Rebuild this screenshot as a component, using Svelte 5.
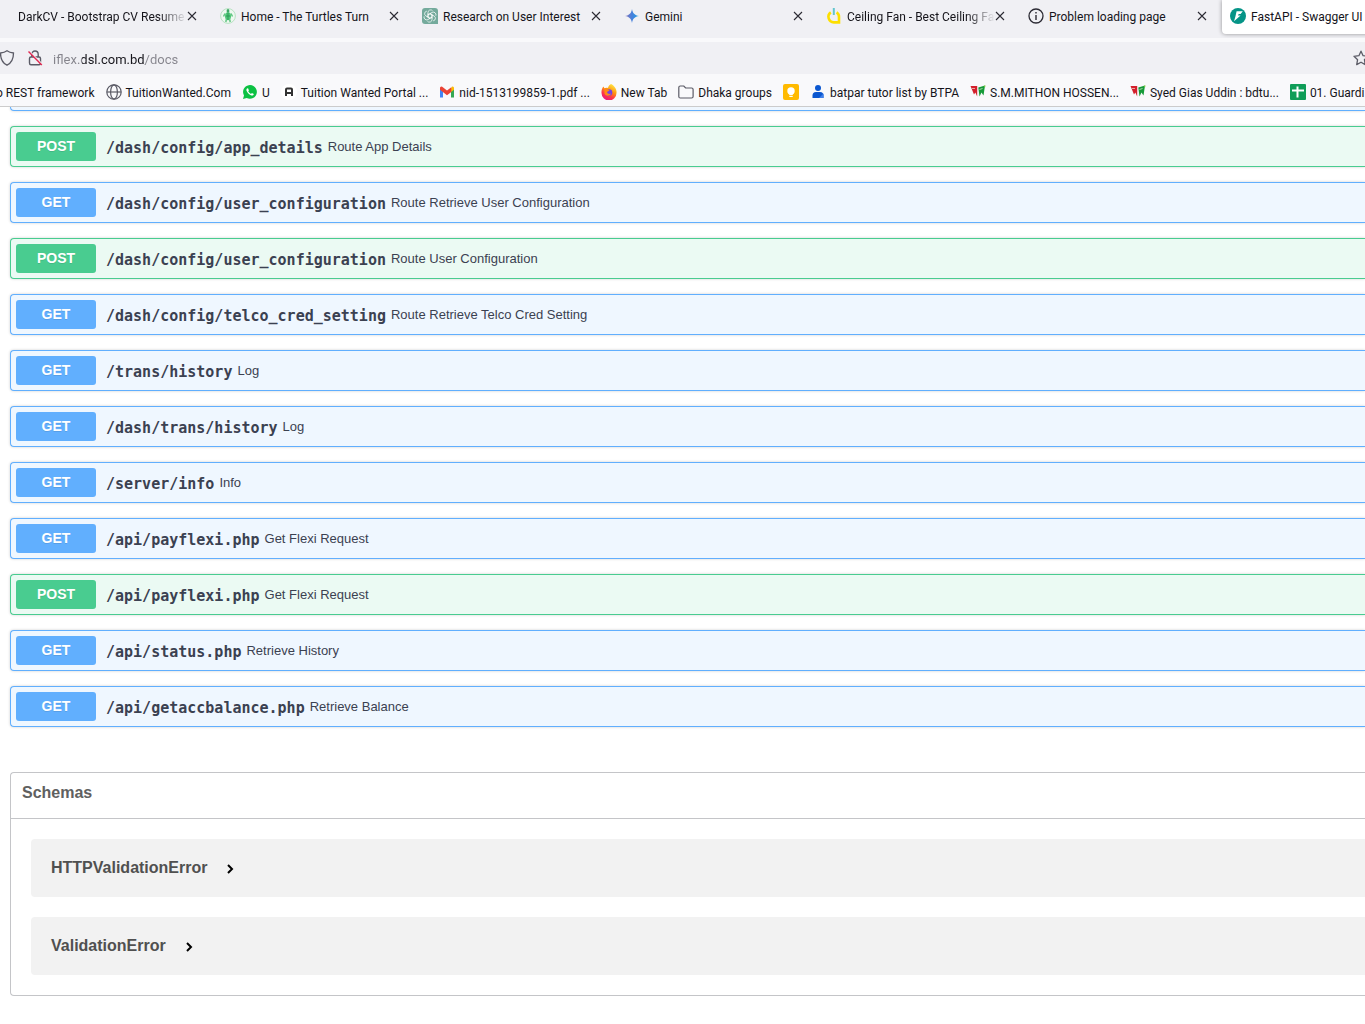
<script lang="ts">
  const tabs = [
    { icon: '', title: 'DarkCV - Bootstrap CV Resume', fade: true },
    { icon: 'turtle', title: 'Home - The Turtles Turn' },
    { icon: 'gpt', title: 'Research on User Interest' },
    { icon: 'gemini', title: 'Gemini' },
    { icon: 'power', title: 'Ceiling Fan - Best Ceiling Fa', fade: true },
    { icon: 'info', title: 'Problem loading page' },
    { icon: 'fastapi', title: 'FastAPI - Swagger UI', active: true }
  ];

  const bookmarks = [
    { icon: '', title: 'o REST framework' },
    { icon: 'globe', title: 'TuitionWanted.Com' },
    { icon: 'whatsapp', title: 'U' },
    { icon: 'portal', title: 'Tuition Wanted Portal ...' },
    { icon: 'gmail', title: 'nid-1513199859-1.pdf ...' },
    { icon: 'firefox', title: 'New Tab' },
    { icon: 'folder', title: 'Dhaka groups' },
    { icon: 'keep', title: '' },
    { icon: 'person', title: 'batpar tutor list by BTPA' },
    { icon: 'flags', title: 'S.M.MITHON HOSSEN...' },
    { icon: 'flags', title: 'Syed Gias Uddin : bdtu...' },
    { icon: 'sheet', title: '01. Guardi' }
  ];

  const operations = [
    { method: 'POST', path: '/dash/config/app_details', summary: 'Route App Details' },
    { method: 'GET', path: '/dash/config/user_configuration', summary: 'Route Retrieve User Configuration' },
    { method: 'POST', path: '/dash/config/user_configuration', summary: 'Route User Configuration' },
    { method: 'GET', path: '/dash/config/telco_cred_setting', summary: 'Route Retrieve Telco Cred Setting' },
    { method: 'GET', path: '/trans/history', summary: 'Log' },
    { method: 'GET', path: '/dash/trans/history', summary: 'Log' },
    { method: 'GET', path: '/server/info', summary: 'Info' },
    { method: 'GET', path: '/api/payflexi.php', summary: 'Get Flexi Request' },
    { method: 'POST', path: '/api/payflexi.php', summary: 'Get Flexi Request' },
    { method: 'GET', path: '/api/status.php', summary: 'Retrieve History' },
    { method: 'GET', path: '/api/getaccbalance.php', summary: 'Retrieve Balance' }
  ];

  const schemas = ['HTTPValidationError', 'ValidationError'];
</script>

{#snippet glyph(name: string)}
  <svg class="icon" viewBox="0 0 16 16" aria-hidden="true">
    {#if name === 'turtle'}
      <circle cx="8" cy="8" r="7.4" fill="#eef8f0" stroke="#a9dcb6" stroke-width=".8" />
      <ellipse cx="8" cy="3" rx="1.4" ry="1.9" fill="#3da765" />
      <path d="M5 5.5 3.5 8.5M11 5.5l1.5 3M6.3 11.5 5.8 14M9.7 11.5l.5 2.5" stroke="#62c583" stroke-width="1.5" />
      <ellipse cx="8" cy="8.3" rx="3" ry="4" fill="#4fc878" />
      <path d="M8 5v7M6 8h4" stroke="#2c9455" stroke-width=".9" />
    {:else if name === 'gpt'}
      <path d="M3 0h10a3 3 0 0 1 3 3v13H3a3 3 0 0 1-3-3V3a3 3 0 0 1 3-3z" fill="#74aa9c" />
      <g fill="none" stroke="#fff" stroke-width=".7">
        {#each [0, 60, 120, 180, 240, 300] as turn}
          <path transform="rotate({turn} 8 8)" d="M6 6.9V4.3a2.6 2.6 0 0 1 4.6-1.5M6 6.9l2-1.2 3.2 1.9" />
        {/each}
      </g>
    {:else if name === 'gemini'}
      <defs>
        <linearGradient id="spark" x1="0" y1="0" x2="1" y2="0">
          <stop offset="0" stop-color="#8a76b8" /><stop offset=".5" stop-color="#4680dc" /><stop offset="1" stop-color="#1ba1e3" />
        </linearGradient>
      </defs>
      <path d="M8 1C8.7 5.3 10.7 7.3 15 8 10.7 8.7 8.7 10.7 8 15 7.3 10.7 5.3 8.7 1 8 5.3 7.3 7.3 5.3 8 1z" fill="url(#spark)" />
    {:else if name === 'power'}
      <path d="M4.8 4.4a5.5 5.5 0 0 0 3 10H13V9a5.4 5.4 0 0 0-2.4-4.7" fill="none" stroke="#fddf00" stroke-width="2.6" />
      <path d="M7.8 0v7" stroke="#62c6cf" stroke-width="2" />
    {:else if name === 'info'}
      <circle cx="8" cy="8" r="7" fill="none" stroke="#2b2a33" stroke-width="1.3" />
      <path d="M8 7v5M8 4v1.6" stroke="#2b2a33" stroke-width="1.4" />
    {:else if name === 'fastapi'}
      <circle cx="8" cy="8" r="8" fill="#059487" />
      <path d="M6.6 3.2h6.2L10.6 6H8.7L8 7.5h2.6L4 13.2l1.3-4.2z" fill="#fff" />
    {:else if name === 'globe'}
      <g fill="none" stroke="#5b5b66" stroke-width="1.2">
        <circle cx="8" cy="8" r="7.2" /><ellipse cx="8" cy="8" rx="3.4" ry="7.2" /><path d="M1 8h14" />
      </g>
    {:else if name === 'whatsapp'}
      <path d="M1 15l1-3.6A6.9 6.9 0 1 1 4.7 14z" fill="#0cc143" />
      <path d="M5.4 4.2c-1 .6-1.3 1.6-.7 2.9 1 2.2 2.7 3.8 4.7 4.4 1.2.3 2.1-.3 2.4-1.5L9.9 9l-.9 1c-1.3-.6-2.2-1.5-2.8-2.7l.7-.9-.7-2z" fill="#fff" />
    {:else if name === 'portal'}
      <circle cx="8" cy="8" r="8" fill="#fff" />
      <path d="M5 12V5.500Q5 4.500 6 4.500h4q1 0 1 1V12M5 9h6" fill="none" stroke="#333" stroke-width="2" />
    {:else if name === 'gmail'}
      <path d="M1 4v9.500h3V7z" fill="#4285f4" /><path d="M15 4v9.500h-3V7z" fill="#34a853" />
      <path d="M12 4.600V8l3-2.200V4a1.400 1.400 0 0 0-2.200-1.200z" fill="#fbbc04" />
      <path d="M1 5.800V4a1.400 1.400 0 0 1 2.200-1.200L8 6.400l4.300-3.200V8L8 11.200z" fill="#ea4335" />
    {:else if name === 'firefox'}
      <defs>
        <linearGradient id="flame" x1=".8" y1="0" x2=".3" y2="1">
          <stop offset="0" stop-color="#fff04f" /><stop offset=".4" stop-color="#ff980e" /><stop offset=".7" stop-color="#ff3647" /><stop offset="1" stop-color="#e31587" />
        </linearGradient>
      </defs>
      <path d="M10 0c3 1.500 6 5 5.500 9A7.500 7.500 0 0 1 .5 9C.3 6 1.200 4 2.500 2.500l.8 1.800C4.500 3.500 6 3.500 7 4c.3-1.800 1.500-3.200 3-4z" fill="url(#flame)" />
      <circle cx="8" cy="8.6" r="3.3" fill="#7542e5" />
      <path d="M3.300 5c2-.8 4 0 5.200 1.500L6 8c.3 2 2.500 2.500 4 1.500-1 3-5.500 3-6.500 0z" fill="#ff8a16" />
    {:else if name === 'folder'}
      <path d="M.8 3.500q0-1.500 1.500-1.500h3.500l1.800 2h6q1.500 0 1.500 1.500v7q0 1.500-1.500 1.500H2.300Q.8 14 .8 12.500z" fill="none" stroke="#5b5b66" stroke-width="1.2" />
    {:else if name === 'keep'}
      <rect width="16" height="16" rx="2" fill="#ffba00" />
      <circle cx="8" cy="7" r="3.7" fill="#fff" /><path d="M6.300 9h3.400v2H6.300zM6.300 11.800h3.400v1.200H6.300z" fill="#fff" />
    {:else if name === 'person'}
      <circle cx="8" cy="4" r="3" fill="#0b57d0" /><path d="M2.500 14v-2.500q0-3.500 3.500-3.500h4q3.500 0 3.500 3.500V14z" fill="#0b57d0" />
      <path d="M13.500 9.500V14H9z" fill="#3f80ea" />
    {:else if name === 'flags'}
      <path d="M.5 2h6.700v10.500L5.300 8.500 4 10.500z" fill="#d3202c" /><path d="M8.300 3.500 15 1.500l-1.500 10-2-3-2 4z" fill="#159b38" />
      <path d="M13.500 2l2-.8-.3 2z" fill="#8ed13a" /><path d="M2 4.500h3M9.500 5.500l3-1M7.700 9v3" stroke="#f3dfd7" stroke-width=".7" />
    {:else if name === 'sheet'}
      <rect width="16" height="16" rx="1" fill="#0f9d58" /><path d="M2 6.500h12M7.500 2.500v11" stroke="#fff" stroke-width="2" />
    {:else if name === 'shield'}
      <path d="M8 .8c2 1.500 4 2 6.500 2.200 0 5.500-1 9.500-6.500 12.200C2.500 12.500 1.500 8.500 1.500 3 4 2.800 6 2.300 8 .8z" fill="none" stroke="#5b5b66" stroke-width="1.3" />
    {:else if name === 'lock'}
      <path d="M4.800 7V4.200a3.200 3.200 0 0 1 6.400 0V7M4 7h8q1.500 0 1.500 1.500V13q0 1.800-1.500 1.800H4q-1.500 0-1.500-1.800V8.500Q2.500 7 4 7z" fill="none" stroke="#5b5b66" stroke-width="1.4" />
      <path d="M2.500 1.500 15 14" stroke="#f0f0f4" stroke-width="1.6" /><path d="M1.500 1.500 14.800 15" stroke="#e22850" stroke-width="1.4" />
    {:else if name === 'star'}
      <path d="M8 1.200l2.100 4.500 4.900.6-3.600 3.400.9 4.900L8 12.200l-4.300 2.400.9-4.900L1 6.300l4.900-.6z" fill="none" stroke="#5b5b66" stroke-width="1.3" stroke-linejoin="round" />
    {/if}
  </svg>
{/snippet}

<div class="window">
  <header>
    <nav class="tabs" aria-label="Open tabs">
      {#each tabs as tab}
        <div class="tab" class:active={tab.active}>
          <button class="tab-label" class:fade={tab.fade}>
            {#if tab.icon}{@render glyph(tab.icon)}{/if}
            <span>{tab.title}</span>
          </button>
          {#if !tab.active}
            <button class="close" aria-label="Close {tab.title}">
              <svg viewBox="0 0 10 10" aria-hidden="true"><path d="M1 1l8 8M9 1 1 9" /></svg>
            </button>
          {/if}
        </div>
      {/each}
    </nav>

    <div class="address">
      <button aria-label="Tracking protection">{@render glyph('shield')}</button>
      <button aria-label="Connection is not secure">{@render glyph('lock')}</button>
      <input type="text" aria-label="Address" value="iflex.dsl.com.bd/docs" />
      <button class="star" aria-label="Bookmark this page">{@render glyph('star')}</button>
    </div>

    <nav class="bookmarks" aria-label="Bookmarks">
      {#each bookmarks as mark}
        <a href="#bookmark" aria-label={mark.title || 'Keep'}>
          {#if mark.icon}{@render glyph(mark.icon)}{/if}
          {#if mark.title}<span>{mark.title}</span>{/if}
        </a>
      {/each}
    </nav>
  </header>

  <main>
    <div class="scrolled-row"></div>
    <div class="operations">
      {#each operations as op}
        <button class="operation {op.method.toLowerCase()}">
          <span class="method">{op.method}</span>
          <span class="path">{op.path}</span>
          <span class="summary">{op.summary}</span>
        </button>
      {/each}
    </div>

    <section class="schemas">
      <h4>Schemas</h4>
      <div class="models">
        {#each schemas as schema}
          <button class="model">
            <span>{schema}</span>
            <svg viewBox="0 0 8 10" aria-hidden="true"><path d="M2 1l4 4-4 4" /></svg>
          </button>
        {/each}
      </div>
    </section>
  </main>
</div>

<style>
  :global(body) {
    margin: 0;
    background: #fff;
  }
  .window {
    overflow: hidden;
    font-family: "Liberation Sans", Arial, sans-serif;
  }
  button {
    margin: 0;
    padding: 0;
    border: 0;
    background: none;
    color: inherit;
    font: inherit;
    text-align: left;
  }
  .icon {
    display: block;
    flex: none;
    width: 16px;
    height: 16px;
  }
  header {
    background: #f9f9fb;
    border-bottom: 1px solid #ccc;
    color: #15141a;
    font-family: Roboto, "Noto Sans", sans-serif;
    font-size: 12px;
    line-height: 16px;
  }

  .tabs {
    display: flex;
    height: 38px;
    padding-left: 10px;
    background: #f0f0f4;
    overflow: hidden;
  }
  .tab {
    display: flex;
    flex: none;
    box-sizing: border-box;
    width: 202px;
    height: 34px;
    padding: 0 15px 2px 8px;
    align-items: center;
  }
  .tab.active {
    background: #fff;
    border-radius: 0 0 4px 4px;
    box-shadow: 0 0 4px rgba(0, 0, 0, 0.4);
  }
  .tab-label {
    display: flex;
    flex: 1;
    min-width: 0;
    gap: 5px;
    align-items: center;
    overflow: hidden;
    white-space: nowrap;
  }
  .tab-label span {
    padding-top: 1px;
  }
  .tab-label.fade {
    mask-image: linear-gradient(to left, transparent, #000 28px);
  }
  .close {
    flex: none;
    width: 10px;
    height: 10px;
  }
  .close svg {
    display: block;
    fill: none;
    stroke: #2b2a33;
    stroke-width: 1.1;
  }

  .address {
    display: flex;
    height: 32px;
    margin-top: 4px;
    gap: 12px;
    align-items: center;
    background: #f0f0f4;
  }
  .address button:first-child {
    margin-left: -1px;
  }
  .address input {
    flex: 1;
    min-width: 0;
    margin-left: -2px;
    padding: 3px 0 0;
    border: 0;
    outline: 0;
    font: 13px/20px Roboto, "Noto Sans", sans-serif;
    color: transparent;
    background: linear-gradient(90deg, #85848c 29px, #15141a 29px 92px, #85848c 92px);
    background-clip: text;
    -webkit-background-clip: text;
  }
  .address .star {
    margin-right: -4px;
  }

  .bookmarks {
    display: flex;
    height: 32px;
    margin-left: -4px;
    gap: 11px;
    align-items: center;
    overflow: hidden;
    white-space: nowrap;
  }
  .bookmarks a {
    display: flex;
    flex: none;
    gap: 4px;
    align-items: center;
    padding-top: 4px;
    color: inherit;
    text-decoration: none;
  }
  .bookmarks span {
    padding-top: 1px;
  }

  main {
    padding-left: 10px;
  }
  .scrolled-row {
    height: 3px;
    border: 1px solid #61affe;
    border-width: 0 0 1px 1px;
    border-radius: 0 0 0 4px;
    background: #eff7ff;
    box-shadow: 0 0 3px rgba(0, 0, 0, 0.19);
    clip-path: inset(0 0 -4px -4px);
  }
  .operations {
    display: flex;
    flex-direction: column;
    gap: 15px;
    padding: 15px 0 45px;
  }
  .operation {
    display: flex;
    align-items: center;
    padding: 5px;
    border: 1px solid;
    border-right: 0;
    border-radius: 4px 0 0 4px;
    box-shadow: 0 0 3px rgba(0, 0, 0, 0.19);
    color: #3b4151;
    white-space: nowrap;
  }
  .get {
    border-color: #61affe;
    background: #eff7ff;
  }
  .post {
    border-color: #49cc90;
    background: #ebfaf3;
  }
  .method {
    width: 80px;
    padding: 6px 0 7px;
    border-radius: 3px;
    color: #fff;
    font-size: 14px;
    font-weight: 700;
    line-height: 16px;
    text-align: center;
    text-shadow: 0 1px 0 rgba(0, 0, 0, 0.1);
  }
  .get .method {
    background: #61affe;
  }
  .post .method {
    background: #49cc90;
  }
  .path {
    padding: 2px 5px 0 10px;
    font-family: "DejaVu Sans Mono", monospace;
    font-size: 15px;
    font-weight: 700;
    line-height: 20px;
  }
  .summary {
    font-size: 13px;
    line-height: 16px;
  }

  .schemas {
    margin-bottom: 28px;
    border: 1px solid #c4c5c8;
    border-right: 0;
    border-radius: 4px 0 0 4px;
  }
  h4 {
    margin: 0;
    padding: 10px 11px 15px;
    border-bottom: 1px solid #c4c5c8;
    color: #606060;
    font-size: 16px;
    line-height: 20px;
  }
  .models {
    display: flex;
    flex-direction: column;
    gap: 20px;
    padding: 20px 0 20px 20px;
  }
  .model {
    display: flex;
    gap: 19px;
    align-items: center;
    padding: 19px 20px;
    border-radius: 4px 0 0 4px;
    background: #f2f2f2;
    color: #505050;
    font-size: 16px;
    font-weight: 700;
    line-height: 20px;
  }
  .model svg {
    width: 8px;
    height: 10px;
    margin-top: 2px;
    fill: none;
    stroke: #000;
    stroke-width: 2;
  }
</style>
